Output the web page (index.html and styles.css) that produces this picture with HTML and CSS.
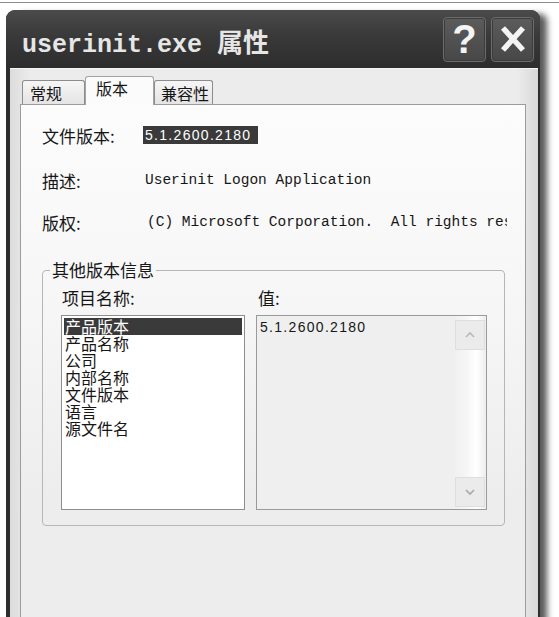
FILE: index.html
```html
<!DOCTYPE html>
<html>
    <head>
        <meta charset="UTF-8">
        <meta name="viewport" content="width=device-width, initial-scale=1.0"/>
        <title>userinit.exe 属性</title>
        <link rel="stylesheet" href="styles.css">
    </head>
    <body>
        <div class="top-rule"></div>

        <div class="window">
            <div class="titlebar">
                <h1 class="title">userinit.exe <span class="title-cjk">属性</span></h1>
                <div class="caption-buttons">
                    <span class="caption-button help">?</span>
                    <span class="caption-button close">
                        <svg width="30" height="30" viewBox="0 0 30 30">
                            <path d="M5 4 L25 26 M25 4 L5 26" stroke="#f4f4f4" stroke-width="5.5" fill="none"/>
                        </svg>
                    </span>
                </div>
            </div>

            <div class="frame">
                <ul class="tabs">
                    <li class="tab tab-general">常规</li>
                    <li class="tab tab-version selected">版本</li>
                    <li class="tab tab-compat">兼容性</li>
                </ul>

                <div class="panel">
                    <div class="info-row first">
                        <span class="label">文件版本:</span>
                        <span class="value highlight">5.1.2600.2180</span>
                    </div>
                    <div class="info-row">
                        <span class="label">描述:</span>
                        <span class="value mono">Userinit Logon Application</span>
                    </div>
                    <div class="info-row">
                        <span class="label">版权:</span>
                        <span class="value mono copyright">(C) Microsoft Corporation.  All rights reserved.</span>
                    </div>

                    <fieldset class="group">
                        <legend>其他版本信息</legend>
                        <div class="columns">
                            <div class="column names">
                                <div class="column-label">项目名称:</div>
                                <ul class="listbox">
                                    <li class="selected">产品版本</li>
                                    <li>产品名称</li>
                                    <li>公司</li>
                                    <li>内部名称</li>
                                    <li>文件版本</li>
                                    <li>语言</li>
                                    <li>源文件名</li>
                                </ul>
                            </div>
                            <div class="column values">
                                <div class="column-label">值:</div>
                                <div class="valuebox">
                                    <div class="value-text">5.1.2600.2180</div>
                                    <div class="scrollbar">
                                        <span class="scroll-button">
                                            <svg width="12" height="8" viewBox="0 0 12 8">
                                                <polyline points="2,6 6,2 10,6" stroke="#b8b8b8" stroke-width="1.6" fill="none"/>
                                            </svg>
                                        </span>
                                        <span class="scroll-button">
                                            <svg width="12" height="8" viewBox="0 0 12 8">
                                                <polyline points="2,2 6,6 10,2" stroke="#a8a8a8" stroke-width="1.6" fill="none"/>
                                            </svg>
                                        </span>
                                    </div>
                                </div>
                            </div>
                        </div>
                    </fieldset>
                </div>
            </div>
        </div>
    </body>
</html>
```

FILE: styles.css
```css
*
{
    box-sizing: border-box;
}

body
{
    margin: 0;
    width: 559px;
    height: 617px;
    overflow: hidden;
    background: #ffffff;
    font-family: "Noto Sans CJK SC", sans-serif;
    color: #161616;
}

.top-rule
{
    height: 1px;
    margin-top: 2px;
    background: #8e8e8e;
}

/* window shell */

.window
{
    display: flex;
    flex-direction: column;
    width: 534px;
    height: 620px;
    margin: 7px 0 0 6px;
    border-radius: 9px 9px 0 0;
    background: #2e2e2e;
    box-shadow: 9px 2px 6px -2px rgba(0, 0, 0, 0.65);
}

.titlebar
{
    display: flex;
    align-items: center;
    justify-content: space-between;
    height: 58px;
    padding: 0 6px 0 16px;
    border-radius: 9px 9px 0 0;
    background: linear-gradient(#4b4b4b, #393939 45%, #2d2d2d);
}

.title
{
    margin: 0;
    padding-top: 4px;
    font-family: "Liberation Mono", monospace;
    font-size: 25px;
    font-weight: bold;
    color: #e6e6e6;
}

.title-cjk
{
    font-family: "Noto Sans CJK SC", sans-serif;
    font-size: 26px;
    font-weight: bold;
}

.caption-buttons
{
    display: flex;
    gap: 5px;
}

.caption-button
{
    display: flex;
    align-items: center;
    justify-content: center;
    width: 43px;
    height: 45px;
    border: 1px solid #6c6c6c;
    border-radius: 4px;
    background: linear-gradient(#5c5c5c, #474747);
    box-shadow: inset 0 0 0 1px #3c3c3c;
    color: #f4f4f4;
    font-family: "Liberation Sans", sans-serif;
    font-size: 40px;
    font-weight: bold;
    line-height: 1;
}

.frame
{
    display: flex;
    flex-direction: column;
    flex: 1;
    margin: 0 2px 0 4px;
    padding: 0 12px 0 10px;
    background: linear-gradient(90deg, #dcdcdc, #ececec 4%, #ececec 96%, #d8d8d8);
    border-top: 1px solid #f4f4f4;
}

/* tabs */

.tabs
{
    display: flex;
    align-items: flex-end;
    height: 35px;
    margin: 0;
    padding: 0 0 0 2px;
    list-style: none;
}

.tab
{
    height: 24px;
    padding: 0 0 0 7px;
    border: 1px solid #8c8c8c;
    border-bottom: none;
    border-radius: 3px 3px 0 0;
    background: linear-gradient(#f6f6f6, #e4e4e4);
    font-size: 16px;
    line-height: 24px;
}

.tab-general
{
    width: 63px;
}

.tab-version
{
    width: 69px;
    padding-left: 10px;
}

.tab-compat
{
    width: 59px;
    padding-left: 6px;
}

.tab.selected
{
    position: relative;
    z-index: 1;
    height: 29px;
    margin-bottom: -1px;
    border-color: #a4a4a4;
    background: #fbfbfb;
    line-height: 22px;
}

/* tab page */

.panel
{
    flex: 1;
    border: 1px solid #9c9c9c;
    border-bottom: none;
    background: linear-gradient(#fcfcfc, #f6f6f6 40%, #ededed 75%);
}

.info-row
{
    display: flex;
    align-items: center;
    height: 20px;
    padding-left: 21px;
    font-size: 17px;
}

.info-row.first
{
    margin-top: 20px;
}

.info-row + .info-row
{
    margin-top: 25px;
}

.info-row + .info-row + .info-row
{
    margin-top: 22px;
}

.label
{
    flex: none;
    width: 101px;
}

.value
{
    flex: 1;
    min-width: 0;
    margin-right: 18px;
    overflow: hidden;
    white-space: pre;
}

.value.highlight
{
    flex: none;
    width: 115px;
    height: 18px;
    padding: 0 2px;
    background: #3a3a3a;
    color: #ffffff;
    font-family: "Liberation Sans", sans-serif;
    font-size: 14px;
    line-height: 18px;
    letter-spacing: 1.3px;
}

.mono
{
    padding-left: 2px;
    font-family: "Liberation Mono", monospace;
    font-size: 14.5px;
}

.copyright
{
    padding-left: 4px;
}

/* group box */

.group
{
    width: 463px;
    min-width: 0;
    margin: 28px 0 0 21px;
    padding: 0;
    border: 1px solid #b6b6b6;
    border-radius: 4px;
}

.group legend
{
    margin-left: 7px;
    padding: 0 2px;
    font-size: 17px;
    line-height: 20px;
}

.columns
{
    display: flex;
    gap: 11px;
    padding: 8px 17px 15px 18px;
}

.column-label
{
    height: 20px;
    margin-bottom: 7px;
    padding-left: 1px;
    font-size: 17px;
    line-height: 20px;
}

.values .column-label
{
    padding-left: 2px;
}

.listbox
{
    width: 184px;
    height: 195px;
    margin: 0;
    padding: 2px;
    list-style: none;
    border: 1px solid #8e8e8e;
    background: #ffffff;
}

.listbox li
{
    height: 17px;
    padding-left: 1px;
    font-size: 16px;
    line-height: 17px;
}

.listbox li.selected
{
    background: #3a3a3a;
    color: #ffffff;
}

.valuebox
{
    display: flex;
    width: 231px;
    height: 195px;
    border: 1px solid #9a9a9a;
    background: #efefef;
}

.value-text
{
    flex: 1;
    padding: 3px 3px;
    font-family: "Liberation Sans", sans-serif;
    font-size: 14px;
    line-height: 17px;
    letter-spacing: 1.3px;
}

.scrollbar
{
    display: flex;
    flex-direction: column;
    justify-content: space-between;
    width: 32px;
    padding: 4px 1px 2px;
    background: linear-gradient(90deg, #f0f0f0, #f6f6f6 40%, #ffffff 70%, #ededed);
}

.scroll-button
{
    display: flex;
    align-items: center;
    justify-content: center;
    height: 30px;
    border: 1px solid #dedede;
    background: #ebebeb;
}
```
